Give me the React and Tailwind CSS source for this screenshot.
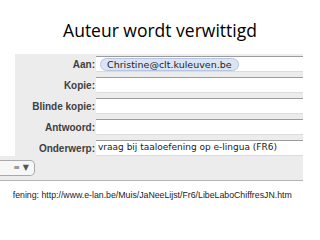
import React from "react";

const rows = [
  { label: "Aan:", value: "pill" },
  { label: "Kopie:" },
  { label: "Blinde kopie:" },
  { label: "Antwoord:" },
  { label: "Onderwerp:", value: "vraag bij taaloefening op e-lingua (FR6)" },
];

function Field({ value }) {
  return (
    <div className="flex-1 h-[16px] bg-white border-t border-t-[#9c9c9c] border-b border-b-[#dcdcdc] flex items-center overflow-hidden">
      {value === "pill" ? (
        <span className="ml-[4px] h-[13px] px-[6px] rounded-full bg-[#dbe4f3] border border-[#b3c5e3] text-[9.5px] leading-[11px] text-[#1e1e1e] flex items-center">
          Christine@clt.kuleuven.be
        </span>
      ) : value ? (
        <span className="ml-[2px] text-[9px] text-[#1a1a1a] whitespace-nowrap">{value}</span>
      ) : null}
    </div>
  );
}

export default function App() {
  return (
    <div
      className="w-[320px] h-[240px] bg-white overflow-hidden"
      style={{ fontFamily: '"DejaVu Sans", "Liberation Sans", sans-serif' }}
    >
      <h1
        className="text-center text-[17.5px] text-black pt-[19px] h-[54px] leading-[22px]"
        style={{ fontFamily: '"Open Sans", "Liberation Sans", sans-serif' }}
      >
        Auteur wordt verwittigd
      </h1>

      <div className="w-[303px]">
        <div className="ml-[15px] bg-[#ececec] pt-[2px] flex flex-col gap-[5px]">
          {rows.map((r) => (
            <div key={r.label} className="flex items-center h-[16px]">
              <div
                className="w-[81px] text-right pr-[1px] text-[10px] font-bold text-[#404040] whitespace-nowrap"
                style={{ fontFamily: '"Liberation Sans", Arial, sans-serif' }}
              >
                {r.label}
              </div>
              <Field value={r.value} />
            </div>
          ))}
        </div>
        <div className="bg-[#ececec] h-[25px] border-b border-[#b5b5b5] flex items-center">
          <div className="h-[16px] w-[35px] bg-[#f7f7f7] border border-[#a9a9a9] rounded-r-[5px] border-l-0 flex items-center justify-end pr-[5px] gap-[3px] text-[8px] text-[#555]">
            <span>≡</span>
            <span>▼</span>
          </div>
        </div>
      </div>

      <div className="mt-[8px] ml-[13px] overflow-hidden whitespace-nowrap">
        <div
          className="ml-[-10px] text-[8.75px] text-[#222]"
          style={{ fontFamily: '"Liberation Sans", Arial, sans-serif' }}
        >
          oefening: http://www.e-lan.be/Muis/JaNeeLijst/Fr6/LibeLaboChiffresJN.htm
        </div>
      </div>
    </div>
  );
}
